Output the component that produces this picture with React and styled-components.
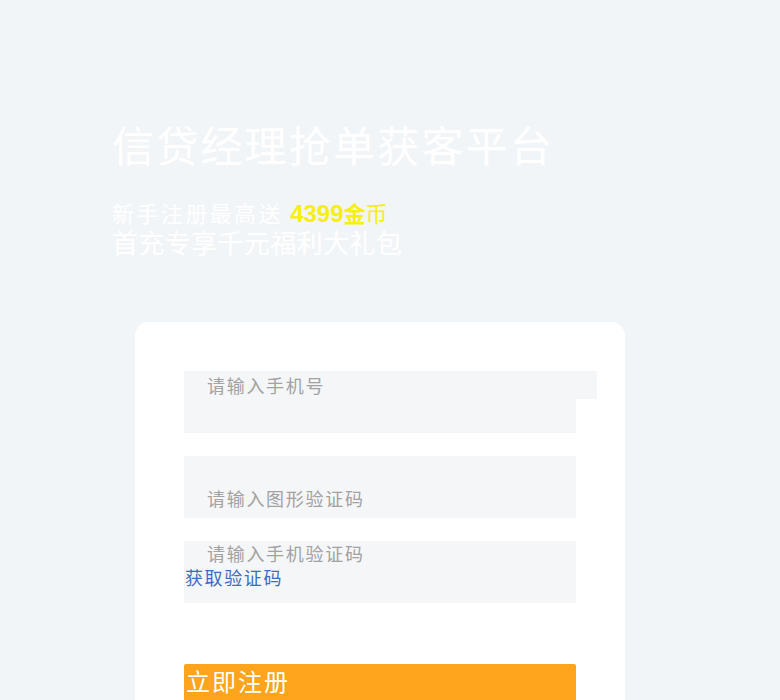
import React from "react";
import styled, { createGlobalStyle } from "styled-components";

const GlobalStyle = createGlobalStyle`
  html, body {
    margin: 0;
    padding: 0;
    background: #f1f5f8;
    font-family: "Noto Sans CJK SC", "Noto Sans", sans-serif;
  }
  * {
    box-sizing: border-box;
  }
`;

const Page = styled.div`
  height: 700px;
  background: #f1f5f8;
  padding: 119px 0 0 0;
  overflow: hidden;
`;

const Hero = styled.div`
  padding-left: 112px;
`;

const Title = styled.h1`
  margin: 0;
  font-size: 42px;
  line-height: 50px;
  font-weight: 400;
  letter-spacing: 2.2px;
  color: #ffffff;
`;

const Sub = styled.div`
  margin-top: 28px;
  color: #ffffff;
`;

const SubLine = styled.p`
  margin: 0;
  height: 30px;
  line-height: 30px;
  font-size: ${(p) => p.size}px;
  letter-spacing: ${(p) => p.spacing}px;
  white-space: nowrap;
`;

const Gold = styled.span`
  color: #f7ee14;
  font-weight: ${(p) => (p.bold ? 700 : 400)};
  letter-spacing: 0;
  font-size: ${(p) => (p.num ? "24px" : "inherit")};
  font-family: ${(p) =>
    p.num ? '"Liberation Sans", Arial, sans-serif' : "inherit"};
`;

const Card = styled.div`
  margin: 65px 0 0 135px;
  width: 490px;
  min-height: 420px;
  background: #ffffff;
  border-radius: 14px;
  padding: 49px 49px 0 49px;
`;

const Form = styled.form`
  display: flex;
  flex-direction: column;
  gap: 23px;
`;

const Field = styled.div`
  width: 392px;
  height: 62px;
  background: #f5f6f8;
  display: flex;
  flex-direction: column;
  justify-content: ${(p) => (p.bottom ? "flex-end" : "flex-start")};
  padding-bottom: ${(p) => (p.bottom ? 6 : 0)}px;
`;

const Input = styled.input`
  display: block;
  width: ${(p) => p.w || 392}px;
  height: ${(p) => p.h || 28}px;
  border: none;
  outline: none;
  margin: 0;
  padding: 0 0 0 23px;
  background: #f5f6f8;
  font-family: inherit;
  font-size: 18px;
  letter-spacing: 1.7px;
  color: #333;
  &::placeholder {
    color: #a2a2a2;
  }
`;

const CodeLink = styled.a`
  display: block;
  padding-left: 1px;
  line-height: 24px;
  font-size: 18px;
  letter-spacing: 1.6px;
  color: #3b6dc4;
  text-decoration: none;
  cursor: pointer;
`;

const Submit = styled.button`
  margin-top: 61px;
  width: 392px;
  height: 50px;
  border: none;
  border-radius: 2px;
  background: #ffa41c;
  color: #ffffff;
  font-family: inherit;
  font-size: 24px;
  letter-spacing: 2px;
  line-height: 34px;
  text-align: left;
  padding: 0 2px;
  display: flex;
  align-items: flex-start;
  cursor: pointer;
`;

export default function App() {
  return (
    <>
      <GlobalStyle />
      <Page>
        <Hero>
          <Title>信贷经理抢单获客平台</Title>
          <Sub>
            <SubLine size={22} spacing={2.4}>
              新手注册最高送{" "}
              <Gold bold num>
                4399
              </Gold>
              <Gold bold>金</Gold>
              <Gold>币</Gold>
            </SubLine>
            <SubLine size={26} spacing={0.4}>
              首充专享千元福利大礼包
            </SubLine>
          </Sub>
        </Hero>
        <Card>
          <Form onSubmit={(e) => e.preventDefault()}>
            <Field>
              <Input w={413} placeholder="请输入手机号" />
            </Field>
            <Field bottom>
              <Input placeholder="请输入图形验证码" />
            </Field>
            <Field>
              <Input h={24} placeholder="请输入手机验证码" />
              <CodeLink>获取验证码</CodeLink>
            </Field>
          </Form>
          <Submit type="submit">立即注册</Submit>
        </Card>
      </Page>
    </>
  );
}
